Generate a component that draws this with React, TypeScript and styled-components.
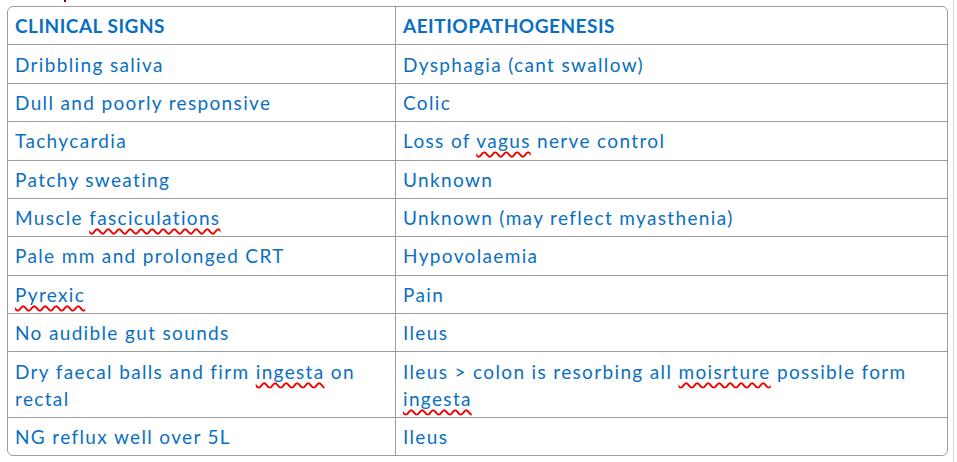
import React from "react";
import styled, { createGlobalStyle } from "styled-components";

const GlobalStyle = createGlobalStyle`
  html, body {
    margin: 0;
    padding: 0;
    background: #ffffff;
  }
`;

const Page = styled.div`
  display: flex;
  width: 957px;
  height: 462px;
  box-sizing: border-box;
  padding-left: 7px;
  font-family: "Lato", "Liberation Sans", sans-serif;
`;

const Main = styled.div`
  display: flex;
  flex-direction: column;
`;

// clipped tail of the line above the table
const Clip = styled.div`
  height: 6px;
`;

const Mark = styled.div`
  width: 2px;
  height: 2px;
  margin-left: 57px;
  background: #5a1010;
`;

const Table = styled.div`
  display: grid;
  grid-template-columns: 387px 552px;
  border: 1px solid #9c9c9c;
  border-radius: 6px;
  overflow: hidden;
`;

const Cell = styled.div<{ $right?: boolean; $last?: boolean; $head?: boolean }>`
  padding: 5.2px 8px 5.2px 7px;
  line-height: 27px;
  font-size: 19px;
  letter-spacing: ${(p) => (p.$head ? "0.5px" : "1.35px")};
  font-weight: ${(p) => (p.$head ? 700 : 400)};
  color: #0a6fc2;
  border-bottom: ${(p) => (p.$last ? "none" : "1px solid #9c9c9c")};
  border-left: ${(p) => (p.$right ? "1px solid #9c9c9c" : "none")};
`;

const Typo = styled.span`
  text-decoration: underline wavy #ee0000;
  text-decoration-thickness: 1.5px;
  text-decoration-skip-ink: none;
  text-underline-offset: 3px;
`;

const Edge = styled.div`
  margin-left: auto;
  margin-right: 3px;
  width: 1px;
  background: #d6d6d6;
`;

const rows: [React.ReactNode, React.ReactNode][] = [
  ["Dribbling saliva", "Dysphagia (cant swallow)"],
  ["Dull and poorly responsive", "Colic"],
  ["Tachycardia", <>Loss of <Typo>vagus</Typo> nerve control</>],
  ["Patchy sweating", "Unknown"],
  [<>Muscle <Typo>fasciculations</Typo></>, "Unknown (may reflect myasthenia)"],
  ["Pale mm and prolonged CRT", "Hypovolaemia"],
  [<Typo>Pyrexic</Typo>, "Pain"],
  ["No audible gut sounds", "Ileus"],
  [
    <>Dry faecal balls and firm <Typo>ingesta</Typo> on rectal</>,
    <>Ileus &gt; colon is resorbing all <Typo>moisrture</Typo> possible form <Typo>ingesta</Typo></>,
  ],
  ["NG reflux well over 5L", "Ileus"],
];

export default function App() {
  return (
    <>
      <GlobalStyle />
      <Page>
        <Main>
          <Clip>
            <Mark />
          </Clip>
          <Table>
            <Cell $head>CLINICAL SIGNS</Cell>
            <Cell $head $right>AEITIOPATHOGENESIS</Cell>
            {rows.map(([a, b], i) => (
              <React.Fragment key={i}>
                <Cell $last={i === rows.length - 1}>{a}</Cell>
                <Cell $right $last={i === rows.length - 1}>{b}</Cell>
              </React.Fragment>
            ))}
          </Table>
        </Main>
        <Edge />
      </Page>
    </>
  );
}
